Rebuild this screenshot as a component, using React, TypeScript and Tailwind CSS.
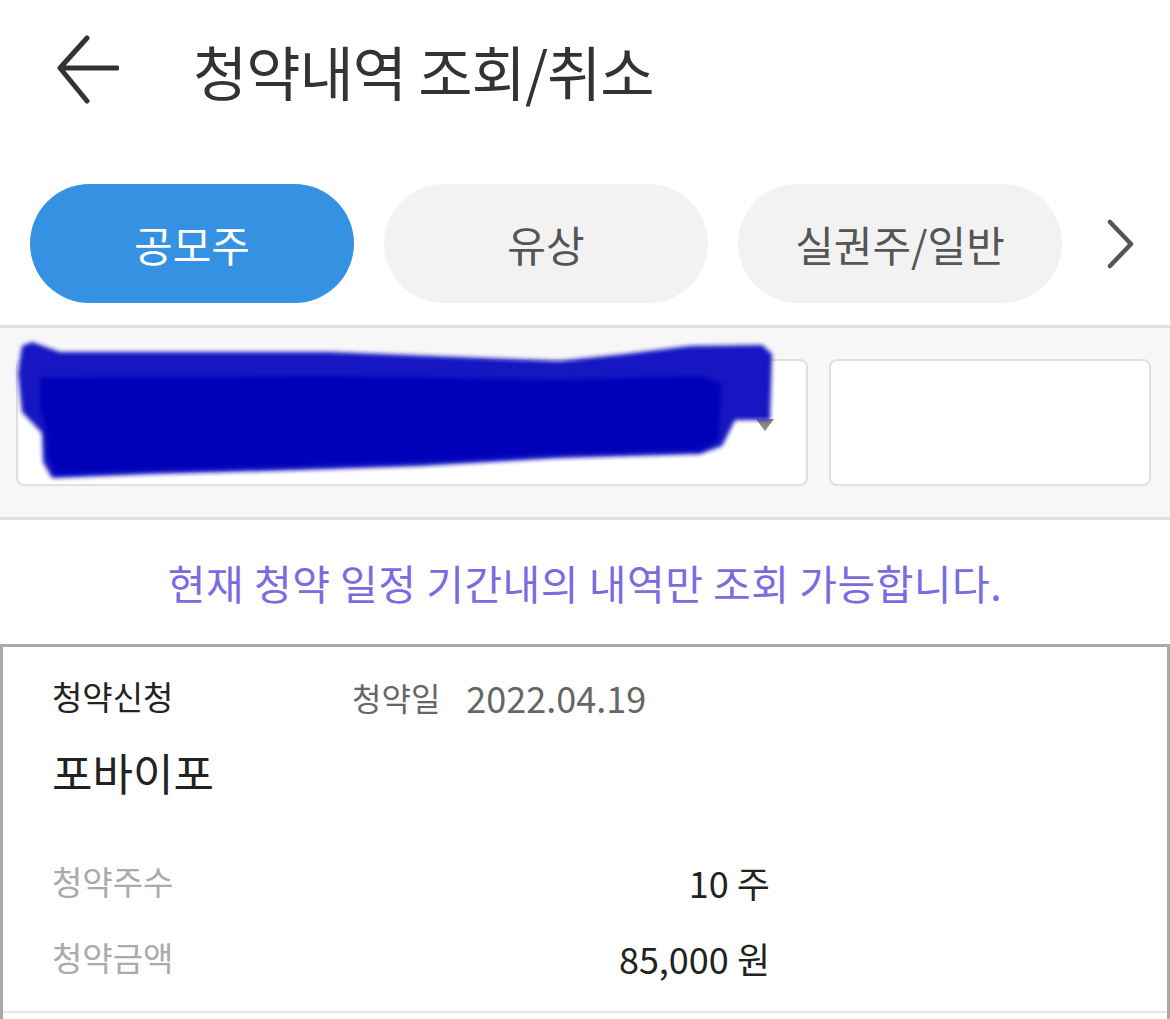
import React from 'react'

const font = { fontFamily: '"Noto Sans CJK KR", "Noto Sans", sans-serif' }

function BackArrow() {
  return (
    <svg width="62" height="70" viewBox="0 0 62 70" fill="none">
      <path
        d="M60 33H4M30 3L3 33L30 66"
        stroke="#333"
        strokeWidth="5"
        strokeLinecap="round"
        strokeLinejoin="round"
      />
    </svg>
  )
}

function Tab({ label, active }: { label: string; active?: boolean }) {
  return (
    <div
      className={
        active
          ? 'flex h-[119px] w-[324px] shrink-0 items-center justify-center rounded-full bg-[#3591e2] text-[42px] text-white'
          : 'flex h-[119px] w-[324px] shrink-0 items-center justify-center rounded-full bg-[#f2f2f2] text-[42px] text-[#555]'
      }
    >
      {label}
    </div>
  )
}

function Scribble() {
  return (
    <svg
      className="pointer-events-none absolute left-0 top-0"
      width="800"
      height="190"
      viewBox="0 0 800 190"
    >
      <defs>
        <filter id="soft" x="-5%" y="-5%" width="110%" height="110%">
          <feGaussianBlur stdDeviation="2" />
        </filter>
      </defs>
      <path
        d="M22 18 L32 14 L60 24 L330 24 L560 33 L625 26 L690 18 L762 17 L772 26 L770 92 L735 92 L722 118 L700 126 L560 130 L420 138 L300 142 L150 146 L52 150 L43 134 L42 105 L22 84 L18 45 Z"
        fill="#1616c2"
        filter="url(#soft)"
      />
      <path
        d="M40 50 L330 48 L560 52 L700 48 L722 56 L718 112 L700 122 L560 126 L420 134 L300 138 L150 142 L55 146 L48 128 L46 100 L40 80 Z"
        fill="#0000b8"
        filter="url(#soft)"
      />
    </svg>
  )
}

export default function App() {
  return (
    <div className="w-[1170px] overflow-hidden bg-white" style={font}>
      {/* header */}
      <div className="flex h-[140px] items-center pl-[57px]">
        <BackArrow />
        <h1 className="ml-[74px] text-[59px] leading-none tracking-[-1px] text-[#333]">
          청약내역 조회/취소
        </h1>
      </div>

      {/* tabs */}
      <div className="relative mt-[44px] flex gap-[30px] pl-[30px]">
        <Tab label="공모주" active />
        <Tab label="유상" />
        <Tab label="실권주/일반" />
        <div className="absolute right-0 top-0 flex h-[119px] w-[88px] items-center bg-gradient-to-r from-white/60 to-white pl-[22px]">
          <svg width="34" height="50" viewBox="0 0 34 50" fill="none">
            <path d="M6 3L27 25L6 47" stroke="#555" strokeWidth="4.5" strokeLinecap="round" strokeLinejoin="round" />
          </svg>
        </div>
      </div>

      {/* filter area */}
      <div className="relative mt-[22px] border-y-[3px] border-[#e0e0e0] bg-[#f7f7f7] px-[16px] py-[31px]">
        <div className="flex gap-[21px]">
          <div className="flex h-[127px] w-[792px] items-center justify-end rounded-[8px] border-2 border-[#e0e0e0] bg-white pr-[32px] pt-[4px]">
            <div className="h-0 w-0 border-x-[9px] border-t-[12px] border-x-transparent border-t-[#8a8a8a]" />
          </div>
          <div className="h-[127px] w-[322px] rounded-[8px] border-2 border-[#e0e0e0] bg-white" />
        </div>
        <Scribble />
      </div>

      {/* notice */}
      <div className="flex h-[124px] items-center justify-center">
        <p className="text-[41px] leading-none tracking-[0.5px] text-[#7b6be0]">
          현재 청약 일정 기간내의 내역만 조회 가능합니다.
        </p>
      </div>

      {/* card */}
      <div className="border-x-[3px] border-t-[3px] border-[#aaaaaa] pt-[30px]">
        <div className="px-[49px]">
          <div className="flex h-[40px] items-center text-[33px]">
            <span className="w-[300px] text-[#222]">청약신청</span>
            <span className="text-[32px] text-[#666]">청약일</span>
            <span className="ml-[26px] text-[36px] text-[#666]">2022.04.19</span>
          </div>
          <div className="mt-[27px] flex h-[56px] items-center text-[44px] text-[#222]">
            포바이포
          </div>
          <div className="mt-[62px] flex h-[40px] w-[718px] items-center justify-between text-[33px]">
            <span className="text-[#aaa]">청약주수</span>
            <span className="text-[36px] text-[#222]">10 주</span>
          </div>
          <div className="mt-[36px] flex h-[40px] w-[718px] items-center justify-between text-[33px]">
            <span className="text-[#aaa]">청약금액</span>
            <span className="text-[36px] text-[#222]">85,000 원</span>
          </div>
        </div>
        <div className="mt-[33px] h-[2px] bg-[#e6e6e6]" />
        <div className="h-[20px]" />
      </div>
    </div>
  )
}
